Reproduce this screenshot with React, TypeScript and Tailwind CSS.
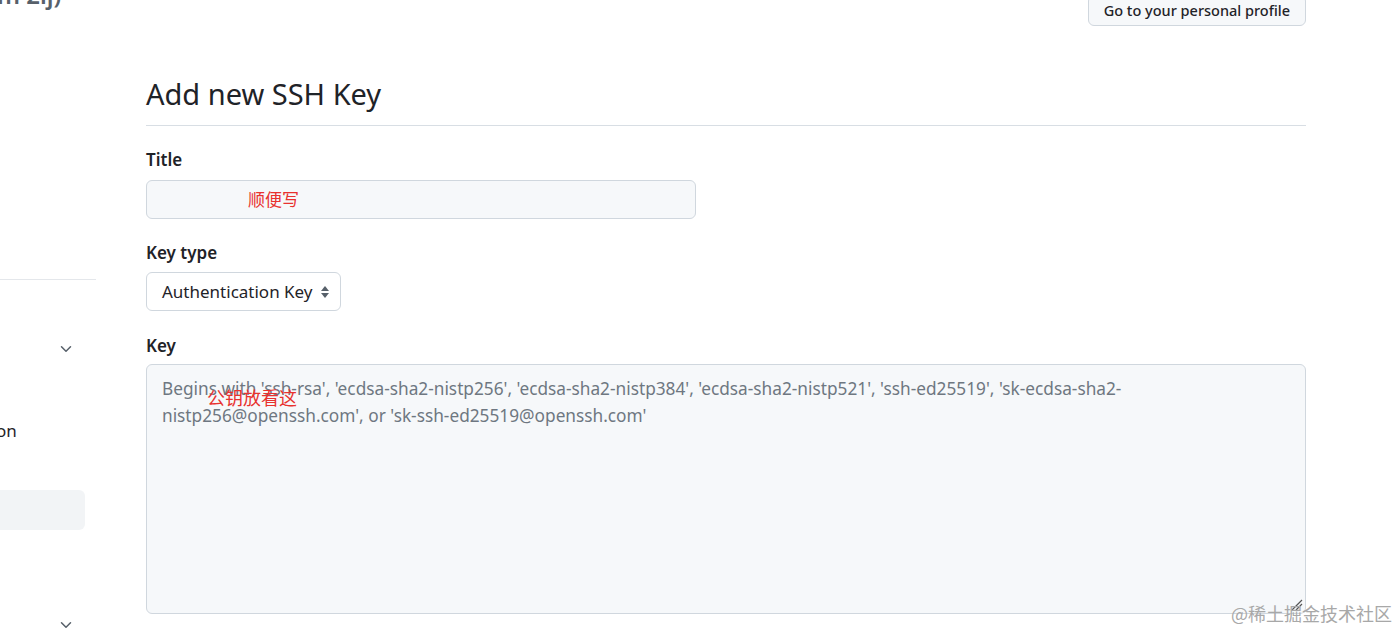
import { ChevronDown } from "lucide-react";

const FONT = "font-['Segoe_UI','Noto_Sans','Noto_Sans_CJK_SC',sans-serif]";

const Sidebar = () => {
  return (
    <div className="w-[96px] shrink-0 flex flex-col overflow-hidden">
      <div className="shrink-0 -mt-[22px] h-[34px] text-[24px] font-semibold text-[#57606a] whitespace-nowrap leading-[34px] -ml-[3px]">
        m 2ij)
      </div>
      <div className="shrink-0 mt-[267px] h-px bg-[#e4e7eb] w-[96px]" />
      <div className="shrink-0 mt-[60px] h-[18px] flex justify-end pr-[21px]">
        <ChevronDown size={18} strokeWidth={2} className="text-[#57606a]" />
      </div>
      <div className="shrink-0 mt-[62px] text-[17px] text-[#1f2328] -ml-[4px] leading-[22px]">
        on
      </div>
      <div className="shrink-0 mt-[48px] h-[40px] w-[85px] bg-[#f2f4f6] rounded-r-md" />
      <div className="shrink-0 mt-[86px] h-[18px] flex justify-end pr-[21px]">
        <ChevronDown size={18} strokeWidth={2} className="text-[#57606a]" />
      </div>
    </div>
  );
};

const SelectArrows = () => (
  <svg width="10" height="14" viewBox="0 0 10 14" className="text-[#57606a]">
    <path d="M5 1 L9 6 L1 6 Z" fill="currentColor" />
    <path d="M5 13 L9 8 L1 8 Z" fill="currentColor" />
  </svg>
);

const SshForm = () => {
  return (
    <div className="w-[1160px] ml-[50px] flex flex-col">
      <div className="flex justify-end -mt-[5px]">
        <div className="h-[31px] px-[15px] flex items-center rounded-[6px] border border-[#d0d7de] bg-[#f6f8fa] text-[14.5px] font-medium text-[#1f2328]">
          Go to your personal profile
        </div>
      </div>
      <div className="mt-[49px] pb-[12px] border-b border-[#d8dee4]">
        <h2 className="text-[29px] font-normal text-[#1f2328] leading-[38px]">
          Add new SSH Key
        </h2>
      </div>
      <label className="mt-[22px] text-[17px] font-semibold text-[#1f2328] leading-[24px]">
        Title
      </label>
      <div className="mt-[8px] w-[550px] h-[39px] rounded-[6px] border border-[#d0d7de] bg-[#f6f8fa] flex items-center pl-[101px]">
        <span className="text-[17px] text-[#e8322f] leading-[22px]">顺便写</span>
      </div>
      <label className="mt-[22px] text-[17px] font-semibold text-[#1f2328] leading-[24px]">
        Key type
      </label>
      <div className="mt-[7px] w-[195px] h-[39px] rounded-[6px] border border-[#d0d7de] bg-white flex items-center pl-[15px] pr-[10px] justify-between">
        <span className="text-[17px] text-[#1f2328]">Authentication Key</span>
        <SelectArrows />
      </div>
      <label className="mt-[23px] text-[17px] font-semibold text-[#1f2328] leading-[24px]">
        Key
      </label>
      <div className="relative mt-[6px] w-[1160px] h-[250px] shrink-0 rounded-[6px] border border-[#d0d7de] bg-[#f6f8fa] px-[15px] pt-[10px]">
        <div className="text-[17.25px] leading-[27px] text-[#6e7781]">
          Begins with 'ssh-rsa', 'ecdsa-sha2-nistp256', 'ecdsa-sha2-nistp384', 'ecdsa-sha2-nistp521', 'ssh-ed25519', 'sk-ecdsa-sha2-
          <br />
          nistp256@openssh.com', or 'sk-ssh-ed25519@openssh.com'
        </div>
        <div className="absolute left-[60px] top-[21px] text-[18px] text-[#e8322f] leading-[24px]">
          公钥放看这
        </div>
        <svg width="14" height="14" viewBox="0 0 14 14" className="absolute right-[2px] bottom-[2px]">
          <path d="M3 13 L13 3 M7 13 L13 7" stroke="#555" strokeWidth="1.2" />
        </svg>
      </div>
    </div>
  );
};

export default function App() {
  return (
    <div className={`relative w-[1397px] h-[629px] overflow-hidden bg-white flex ${FONT}`}>
      <Sidebar />
      <SshForm />
      <div className="absolute left-[1231px] top-[600px] text-[18px] text-[#a8a8a8] font-['Noto_Sans_CJK_SC',serif] whitespace-nowrap">
        @稀土掘金技术社区
      </div>
    </div>
  );
}
